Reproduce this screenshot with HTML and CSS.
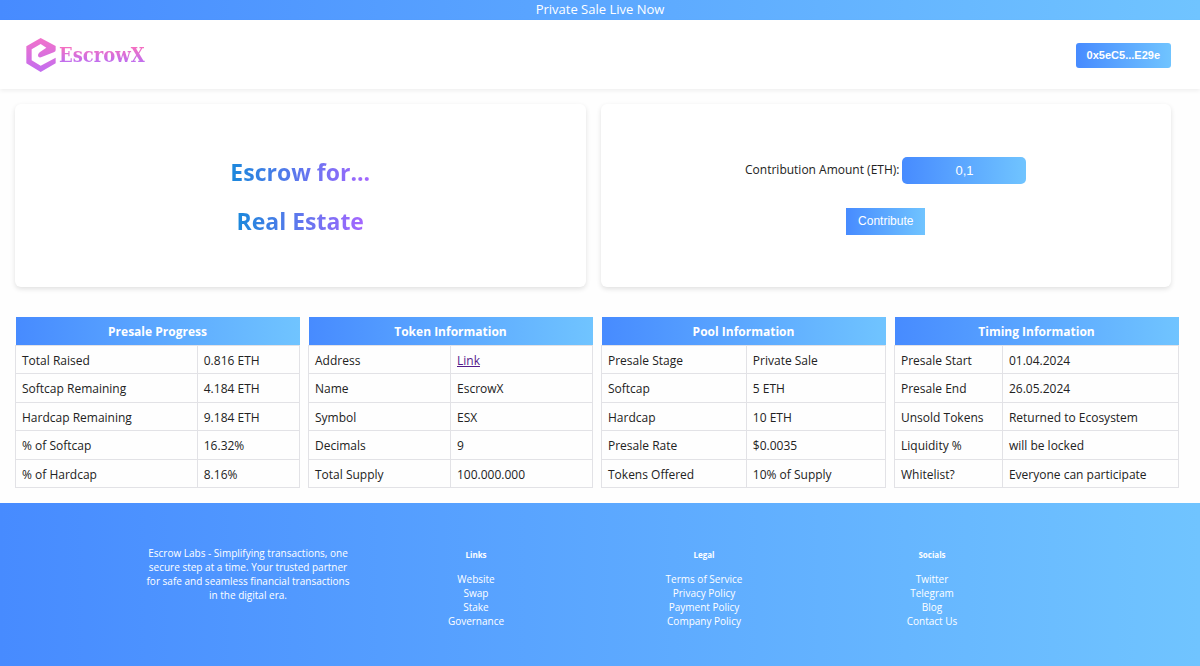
FILE: index.html
```html
<!DOCTYPE html>
<html lang="en">
<head>
<meta charset="utf-8">
<title>EscrowX Private Sale</title>
<link rel="stylesheet" href="styles.css">
</head>
<body>
<div class="banner">Private Sale Live Now</div>
<header class="header">
  <a class="logo" href="#">
    <svg class="logo-mark" viewBox="0 0 88 102" aria-hidden="true">
      <defs><linearGradient id="mark" x1="0" y1="0" x2="0" y2="1"><stop offset="0" stop-color="#f272ca"/><stop offset="1" stop-color="#c26df0"/></linearGradient></defs>
      <path fill="url(#mark)" d="M43 0 L88 24 V36 Q88 40 84 42 L44 58 Q36 60 35 53 Q34 48 40 43 L60 29 L43 18 L16 34 V67 L43 83 L88 59 V76 L43 102 L0 76 V25 Z"/>
    </svg>
    <span class="logo-text">EscrowX</span>
  </a>
  <button class="wallet" type="button">0x5eC5...E29e</button>
</header>
<main class="main">
  <div class="cards">
    <section class="card">
      <h1 class="headline">Escrow for...</h1>
      <h1 class="headline">Real Estate</h1>
    </section>
    <form class="card">
      <div class="field">
        <label for="amount">Contribution Amount (ETH):</label>
        <input class="amount" id="amount" type="text" inputmode="decimal" value="0,1">
      </div>
      <button class="contribute" type="button">Contribute</button>
    </form>
  </div>
  <div class="tables">
    <table class="info">
      <colgroup><col class="name-wide"><col></colgroup>
      <thead><tr><th colspan="2">Presale Progress</th></tr></thead>
      <tbody>
        <tr><td>Total Raised</td><td>0.816 ETH</td></tr>
        <tr><td>Softcap Remaining</td><td>4.184 ETH</td></tr>
        <tr><td>Hardcap Remaining</td><td>9.184 ETH</td></tr>
        <tr><td>% of Softcap</td><td>16.32%</td></tr>
        <tr><td>% of Hardcap</td><td>8.16%</td></tr>
      </tbody>
    </table>
    <table class="info">
      <colgroup><col class="name-half"><col></colgroup>
      <thead><tr><th colspan="2">Token Information</th></tr></thead>
      <tbody>
        <tr><td>Address</td><td><a class="address" href="#">Link</a></td></tr>
        <tr><td>Name</td><td>EscrowX</td></tr>
        <tr><td>Symbol</td><td>ESX</td></tr>
        <tr><td>Decimals</td><td>9</td></tr>
        <tr><td>Total Supply</td><td>100.000.000</td></tr>
      </tbody>
    </table>
    <table class="info">
      <colgroup><col class="name-medium"><col></colgroup>
      <thead><tr><th colspan="2">Pool Information</th></tr></thead>
      <tbody>
        <tr><td>Presale Stage</td><td>Private Sale</td></tr>
        <tr><td>Softcap</td><td>5 ETH</td></tr>
        <tr><td>Hardcap</td><td>10 ETH</td></tr>
        <tr><td>Presale Rate</td><td>$0.0035</td></tr>
        <tr><td>Tokens Offered</td><td>10% of Supply</td></tr>
      </tbody>
    </table>
    <table class="info">
      <colgroup><col class="name-narrow"><col></colgroup>
      <thead><tr><th colspan="2">Timing Information</th></tr></thead>
      <tbody>
        <tr><td>Presale Start</td><td>01.04.2024</td></tr>
        <tr><td>Presale End</td><td>26.05.2024</td></tr>
        <tr><td>Unsold Tokens</td><td>Returned to Ecosystem</td></tr>
        <tr><td>Liquidity %</td><td>will be locked</td></tr>
        <tr><td>Whitelist?</td><td>Everyone can participate</td></tr>
      </tbody>
    </table>
  </div>
</main>
<footer class="footer">
  <p class="about">Escrow Labs - Simplifying transactions, one secure step at a time. Your trusted partner for safe and seamless financial transactions in the digital era.</p>
  <nav class="links">
    <h2>Links</h2>
    <a href="#">Website</a><a href="#">Swap</a><a href="#">Stake</a><a href="#">Governance</a>
  </nav>
  <nav class="links">
    <h2>Legal</h2>
    <a href="#">Terms of Service</a><a href="#">Privacy Policy</a><a href="#">Payment Policy</a><a href="#">Company Policy</a>
  </nav>
  <nav class="links">
    <h2>Socials</h2>
    <a href="#">Twitter</a><a href="#">Telegram</a><a href="#">Blog</a><a href="#">Contact Us</a>
  </nav>
</footer>
</body>
</html>
```
FILE: styles.css
```css
:root {
  --blue: linear-gradient(to right, #478bff, #70c4ff);
}
* { box-sizing: border-box; }
body {
  margin: 0;
  min-height: 100vh;
  display: flex;
  flex-direction: column;
  background: #fefefe;
  color: #222;
  font: 12px/18px "Segoe UI", "Open Sans", sans-serif;
}
.banner {
  height: 20px;
  background: var(--blue);
  color: #fff;
  font-size: 13px;
  text-align: center;
}
.header {
  display: flex;
  align-items: center;
  justify-content: space-between;
  padding: 18px 29px 17px 26px;
  background: #fff;
  box-shadow: 0 2px 4px rgba(0, 0, 0, 0.06);
}
.logo {
  display: flex;
  align-items: center;
  gap: 3px;
  text-decoration: none;
}
.logo-mark { width: 30px; height: 34px; }
.logo-text {
  background: linear-gradient(#f56fc0 20%, #b96ff5 85%);
  background-clip: text;
  color: transparent;
  font: bold 20px/26px "Roboto Slab", "DejaVu Serif Condensed", "DejaVu Serif", serif;
}
.wallet, .contribute, .amount {
  border: 0;
  background: var(--blue);
  color: #fff;
  font-family: "Liberation Sans", Arial, sans-serif;
}
.wallet {
  height: 25px;
  padding: 0 11px;
  border-radius: 3px;
  font-size: 11px;
  font-weight: bold;
}
.main { padding: 15px 21px 15px 15px; }
.cards {
  display: grid;
  grid-template-columns: 1fr 1fr;
  gap: 15px;
  padding-right: 8px;
}
.card {
  display: flex;
  flex-direction: column;
  align-items: center;
  justify-content: center;
  min-height: 183px;
  border-radius: 6px;
  background: #fff;
  box-shadow: 0 2px 5px rgba(0, 0, 0, 0.12);
}
.headline {
  margin: 0;
  padding: 9px 0 7px;
  background: linear-gradient(to right, #1a88dc, #a566ff);
  background-clip: text;
  color: transparent;
  font-size: 23px;
  line-height: 33px;
}
.field {
  display: flex;
  align-items: center;
  gap: 3px;
}
.amount {
  width: 124px;
  height: 27px;
  border-radius: 5px;
  font-size: 13px;
  text-align: center;
}
.contribute {
  height: 27px;
  margin: 24px 0 0;
  padding: 0 12px;
  font-size: 12px;
}
.tables {
  display: grid;
  grid-template-columns: repeat(4, 1fr);
  gap: 8px;
  margin-top: 30px;
}
.info {
  width: 100%;
  height: 171px;
  border-collapse: collapse;
  table-layout: fixed;
}
.info thead { background: var(--blue); }
.info th {
  height: 28px;
  padding: 3px 0 0;
  color: #fff;
}
.info td {
  padding: 3px 6px 0;
  border: 1px solid #e2e2e6;
}
.name-wide { width: 64%; }
.name-half { width: 50%; }
.name-medium { width: 51%; }
.name-narrow { width: 38%; }
.address { color: #551a8b; }
.footer {
  flex: 1;
  display: grid;
  grid-template-columns: repeat(4, 1fr);
  padding: 43px 154px 36px 134px;
  background: var(--blue);
  color: #fff;
  font-size: 10px;
  line-height: 14px;
  text-align: center;
}
.about { margin: 0; padding: 0 10px; }
.links {
  display: flex;
  flex-direction: column;
  align-items: center;
}
.links h2 {
  margin: 2px 0 10px;
  font-size: 8px;
  line-height: 14px;
}
.links a { color: #fff; text-decoration: none; }
```
